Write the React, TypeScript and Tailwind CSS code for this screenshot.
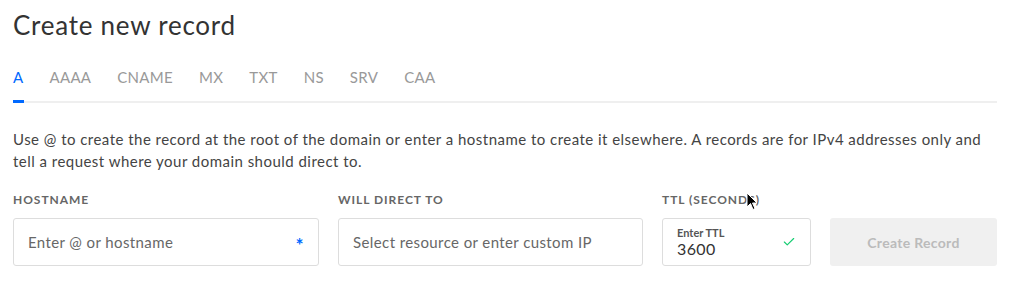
import { Check } from "lucide-react"

const tabs = ["A", "AAAA", "CNAME", "MX", "TXT", "NS", "SRV", "CAA"]

export default function App() {
  return (
    <div className="relative h-[307px] w-[1021px] bg-white px-[13px] font-['Lato',sans-serif] text-[#333]">
      <h1 className="pt-[8px] text-[26px] leading-[34px] tracking-[0.75px] text-[#333]">Create new record</h1>

      {/* record type tabs */}
      <div className="mt-[24px] w-[984px] border-b-2 border-[#efefef]">
        <div className="flex gap-[26px] text-[15px] leading-[22px] tracking-[0.3px] text-[#999]">
          {tabs.map((t, i) => (
            <div key={t} className={i === 0 ? "relative pb-[13px] text-[#0069ff]" : "pb-[13px]"}>
              {t}
              {i === 0 && <div className="absolute bottom-[-2px] left-0 h-[3px] w-[11px] bg-[#0069ff]" />}
            </div>
          ))}
        </div>
      </div>

      <p className="mt-[25px] w-[984px] text-[15px] leading-[22px] tracking-[0.47px] text-[#444]">
        Use @ to create the record at the root of the domain or enter a hostname to create it elsewhere. A records are for IPv4 addresses only and tell a request where your domain should direct to.
      </p>

      <div className="mt-[20px] flex gap-[19px]">
        <div className="w-[306px]">
          <div className="text-[12px] font-bold uppercase leading-[16px] tracking-[0.08em] text-[#666]">Hostname</div>
          <div className="mt-[10px] flex h-[48px] items-center justify-between rounded-[3px] border border-[#ddd] px-[14px] text-[15px] tracking-[0.4px] text-[#676767]">
            <span>Enter @ or hostname</span>
            <span className="translate-y-[3px] text-[19px] font-bold text-[#0069ff]">*</span>
          </div>
        </div>
        <div className="w-[305px]">
          <div className="text-[12px] font-bold uppercase leading-[16px] tracking-[0.08em] text-[#666]">Will direct to</div>
          <div className="mt-[10px] flex h-[48px] items-center rounded-[3px] border border-[#ddd] px-[14px] text-[15px] tracking-[0.4px] text-[#676767]">
            Select resource or enter custom IP
          </div>
        </div>
        <div className="w-[149px]">
          <div className="text-[12px] font-bold uppercase leading-[16px] tracking-[0.08em] text-[#666]">TTL (seconds)</div>
          <div className="mt-[10px] flex h-[48px] items-center justify-between rounded-[3px] border border-[#ddd] px-[14px]">
            <div className="flex flex-col">
              <span className="text-[11px] font-bold leading-[13px] text-[#555]">Enter TTL</span>
              <span className="text-[16px] leading-[19px] tracking-[0.4px] text-[#333]">3600</span>
            </div>
            <Check className="h-[14px] w-[14px] text-[#15cd72]" strokeWidth={2} />
          </div>
        </div>
        <div className="flex w-[167px] flex-col justify-end">
          <button className="h-[48px] rounded-[3px] bg-[#f0f0f0] text-[14px] font-bold tracking-[0.3px] text-[#bbb]">Create Record</button>
        </div>
      </div>

      {/* mouse pointer */}
      <svg className="absolute left-[746px] top-[192px]" width="12" height="19" viewBox="0 0 12 19">
        <path d="M1 1 L1 15 L4.5 11.5 L7 17.5 L9 16.5 L6.5 11 L11 11 Z" fill="#000" stroke="#fff" strokeWidth="1" />
      </svg>
    </div>
  )
}
